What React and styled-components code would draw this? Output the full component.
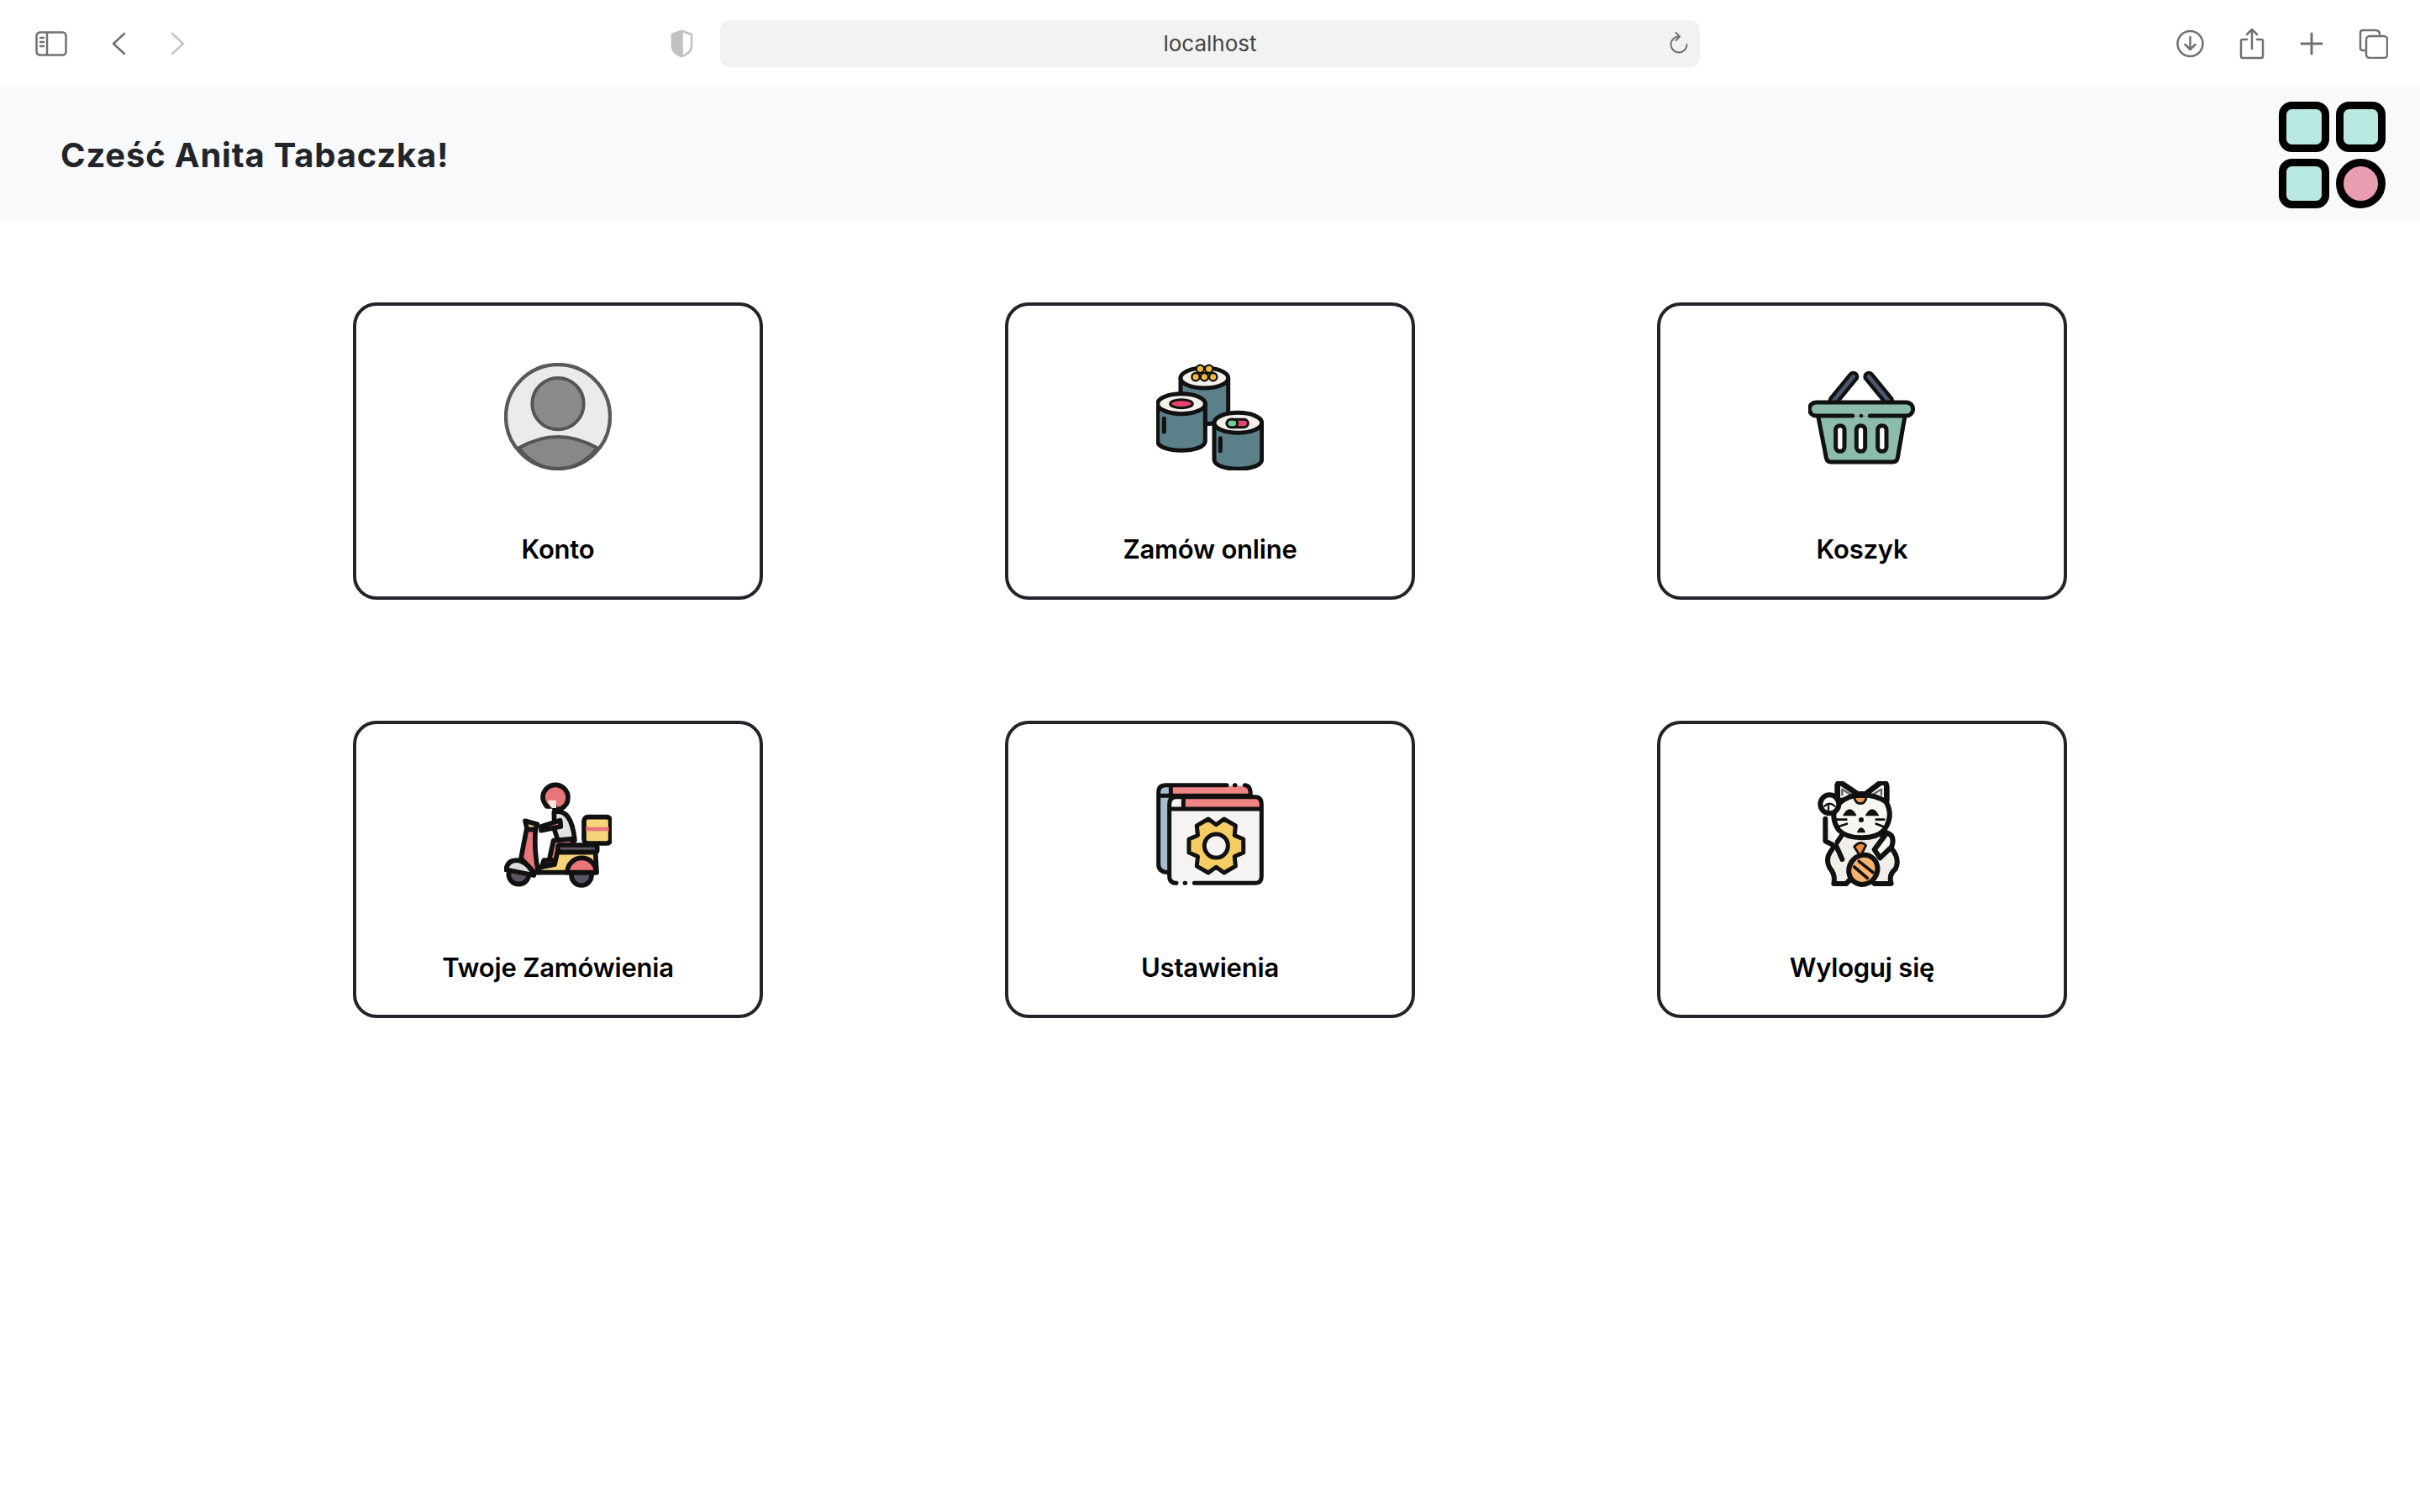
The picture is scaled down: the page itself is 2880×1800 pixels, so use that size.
import React from 'react';
import styled, { createGlobalStyle } from 'styled-components';

const GlobalStyle = createGlobalStyle`
  html, body {
    margin: 0;
    padding: 0;
    background: #fff;
    font-family: Inter, "Liberation Sans", sans-serif;
  }
`;

const Toolbar = styled.div`
  height: 104px;
  display: flex;
  align-items: center;
  padding: 0 38px 0 42px;
  background: #fff;
`;

const NavGroup = styled.div`
  flex: 0 0 756px;
  display: flex;
  align-items: center;
  gap: 53px;
`;

const ActionGroup = styled.div`
  margin-left: auto;
  display: flex;
  align-items: center;
  gap: 42px;
`;

const AddressBar = styled.div`
  width: 1166px;
  height: 56px;
  margin-left: 32px;
  padding: 0 14px 2px;
  box-sizing: border-box;
  display: grid;
  grid-template-columns: 1fr auto 1fr;
  align-items: center;
  background: #f2f2f2;
  border-radius: 12px;
  color: #444;
  font-size: 26px;
`;

const Reload = styled.span`
  grid-column: 3;
  justify-self: end;
  display: flex;
`;

const Header = styled.header`
  height: 160px;
  display: flex;
  align-items: center;
  justify-content: space-between;
  padding: 0 41px 0 72px;
  background: #f8f9fa;
`;

const Title = styled.h1`
  margin: 0;
  font-size: 40px;
  font-weight: 700;
  letter-spacing: 0.8px;
  color: #212529;
`;

const Menu = styled.main`
  display: grid;
  grid-template-columns: repeat(3, 488px);
  justify-content: center;
  column-gap: 288px;
  row-gap: 144px;
  padding-top: 96px;
`;

const Card = styled.a`
  box-sizing: border-box;
  height: 354px;
  padding-top: 68px;
  display: flex;
  flex-direction: column;
  align-items: center;
  border: 4px solid #212529;
  border-radius: 28px;
  color: #000;
  cursor: pointer;
`;

const Label = styled.span`
  margin-top: 74px;
  font-size: 31px;
  line-height: 40px;
  font-weight: 600;
  letter-spacing: -0.2px;
`;

const IconSvg = styled.svg`
  filter: blur(0.6px);
`;

const Icon = ({ x, y, sw = 15, children }) => (
    <IconSvg width="128" height="128" viewBox={`${x} ${y} 384 384`} fill="none" stroke="#111" strokeWidth={sw}
             strokeLinecap="round" strokeLinejoin="round">
        {children}
    </IconSvg>
);

const Glyph = ({ w, h, sw = 2.5, color = '#707070', children }) => (
    <svg width={w} height={h} viewBox={`0 0 ${w} ${h}`} fill="none" stroke={color} strokeWidth={sw}
         strokeLinecap="round" strokeLinejoin="round">
        {children}
    </svg>
);

const UserIcon = () => (
    <Icon x={120} y={66}>
        <circle cx="312" cy="258" r="186" fill="#ebebeb" stroke="#5a5a5a" strokeWidth="13"/>
        <circle cx="312" cy="212" r="92" fill="#8b8b8b" stroke="#555" strokeWidth="12"/>
        <path d="M172 370Q312 290 452 370Q395 444 312 444Q229 444 172 370Z" fill="#888" stroke="#555" strokeWidth="12"/>
    </Icon>
);

const Roll = ({ cx, cy, bottom, children }) => (
    <g>
        <path d={`M${cx - 85} ${cy}V${bottom - 35}C${cx - 85} ${bottom + 10} ${cx + 85} ${bottom + 10} ${cx + 85} ${bottom - 35}V${cy}Z`}
              fill="#5c8089"/>
        <ellipse cx={cx} cy={cy} rx="85" ry="36" fill="#f4f0ec"/>
        {children}
    </g>
);

const SushiIcon = () => (
    <Icon x={108} y={66}>
        <Roll cx={280} cy={120} bottom={285}>
            <g fill="#f2bd36" strokeWidth="7">
                <circle cx="265" cy="88" r="14"/>
                <circle cx="296" cy="88" r="14"/>
                <circle cx="249" cy="116" r="14"/>
                <circle cx="280" cy="116" r="14"/>
                <circle cx="311" cy="116" r="14"/>
            </g>
        </Roll>
        <Roll cx={198} cy={212} bottom={380}>
            <ellipse cx="198" cy="212" rx="40" ry="15" fill="#e8446f" strokeWidth="9"/>
            <path d="M136 265V312"/>
        </Roll>
        <Roll cx={400} cy={280} bottom={446}>
            <rect x="360" y="268" width="76" height="28" rx="14" fill="#e8446f" strokeWidth="9"/>
            <rect x="360" y="268" width="38" height="28" rx="14" fill="#6fd08c" strokeWidth="9"/>
            <path d="M337 335V380"/>
        </Roll>
    </Icon>
);

const BasketIcon = () => (
    <Icon x={114} y={66}>
        <path d="M205 200L275 115M400 200L330 115" strokeWidth="40"/>
        <path d="M205 200L275 115M400 200L330 115" stroke="#4b5671" strokeWidth="14"/>
        <path d="M148 250L178 405Q181 420 196 420H415Q430 420 433 405L460 250Z" fill="#8cbdab"/>
        <rect x="118" y="207" width="370" height="50" rx="25" fill="#8cbdab" stroke="none"/>
        <path d="M272 255H142A24 24 0 0 1 142 207H464A24 24 0 0 1 464 255H334"/>
        <circle cx="303" cy="255" r="7" fill="#111" stroke="none"/>
        <g fill="#fff">
            <rect x="212" y="290" width="31" height="92" rx="15"/>
            <rect x="286" y="290" width="31" height="92" rx="15"/>
            <rect x="362" y="290" width="31" height="92" rx="15"/>
        </g>
    </Icon>
);

const ScooterIcon = () => (
    <Icon x={120} y={60} sw={17}>
        <circle cx="172" cy="392" r="36" fill="#5b5462"/>
        <circle cx="396" cy="396" r="36" fill="#5b5462"/>
        <rect x="405" y="188" width="95" height="94" rx="14" fill="#f6d57a"/>
        <rect x="412" y="224" width="82" height="14" fill="#e8757a" stroke="none"/>
        <path d="M298 170Q360 155 372 270L312 272L300 235Z" fill="#e2e2e2"/>
        <path d="M320 200L252 222V236L322 222Z" fill="#e8757a"/>
        <path d="M366 266L296 272L280 345H306L314 298L366 288Z" fill="#e8757a"/>
        <path d="M262 342H304V360H256Z" fill="#4d4650"/>
        <rect x="312" y="288" width="140" height="26" rx="6" fill="#5f5a66"/>
        <path d="M310 314H446L450 386H245V368L300 358Z" fill="#f6d57a"/>
        <path d="M345 386A52 52 0 0 1 449 386Z" fill="#e8757a"/>
        <path d="M200 232H232Q226 310 242 386H228L180 335Z" fill="#e8757a"/>
        <path d="M195 202L238 214L232 232H202Z" fill="#f6d57a"/>
        <path d="M126 376Q134 336 176 344Q212 358 226 396Z" fill="#dcdcdc"/>
        <path d="M272 150Q258 132 258 118A45 45 0 0 1 348 118Q348 148 320 160H300V150Z" fill="#e8757a"/>
        <path d="M276 128H306V156H292Q278 148 276 128Z" fill="#fbe6dc" stroke="none"/>
    </Icon>
);

// six flat teeth, outline computed once
const gearPoints = Array.from({ length: 6 }).flatMap((_, i) => {
    const a = (i * Math.PI) / 3;
    const pt = (r, d) => `${322 + r * Math.cos(a + d)},${297 + r * Math.sin(a + d)}`;
    return [pt(76, -0.52), pt(100, -0.24), pt(100, 0.24), pt(76, 0.52)];
}).join(' ');

const SettingsIcon = () => (
    <Icon x={108} y={66}>
        <path d="M116 110Q116 82 142 82H440V125H160V392Q116 392 116 360Z" fill="#a6bccf" stroke="none"/>
        <rect x="160" y="84" width="282" height="32" fill="#f08585" stroke="none"/>
        <path d="M360 80H142Q116 80 116 106V362Q116 390 150 392M388 80H390M424 80Q445 80 445 115M116 118H445M160 84V122"/>
        <path d="M155 430V150Q155 122 178 122H462Q484 122 484 150V405Q484 430 462 430Z" fill="#f6f4f2" stroke="none"/>
        <rect x="208" y="128" width="272" height="32" fill="#f08585" stroke="none"/>
        <path d="M180 430Q155 430 155 405V150Q155 122 178 122H462Q484 122 484 150V405Q484 430 462 430H244M210 430H212M155 165H484M205 124V165"/>
        <polygon points={gearPoints} fill="#f6cd63"/>
        <circle cx="322" cy="297" r="42" fill="#f6f4f2"/>
    </Icon>
);

const CatIcon = () => (
    <Icon x={114} y={66} sw={18}>
        <path d="M205 432Q212 400 190 375Q175 345 192 320L240 250H370L420 318Q440 350 425 380Q400 400 410 432H350L335 420H260L250 432Z"
              fill="#efeee8"/>
        <path d="M175 200V280L215 300L235 345" fill="#f5f3ee"/>
        <path d="M218 135V80Q222 66 240 78L290 112H318L368 74Q392 64 394 84V135Z" fill="#f4f2ec" strokeWidth="20"/>
        <path d="M235 115V95L268 115M375 115V95L342 115" strokeWidth="7" stroke="#666"/>
        <path d="M218 150Q190 190 222 240Q250 268 305 268Q360 268 385 240Q420 190 392 140Q355 115 305 115Q255 115 218 150Z"
              fill="#f8f6f0"/>
        <path d="M278 122H322Q318 145 300 146Q282 145 278 122Z" fill="#f09a54" strokeWidth="8"/>
        <circle cx="190" cy="148" r="33" fill="#fff"/>
        <path d="M186 148V170M172 155Q190 138 208 155" strokeWidth="7"/>
        <path d="M240 188Q262 148 284 188ZM320 188Q342 148 364 188Z" fill="#111" strokeWidth="4"/>
        <circle cx="303" cy="204" r="9" fill="#111" stroke="none"/>
        <path d="M290 248Q303 220 316 248Z" fill="#111" strokeWidth="4"/>
        <path d="M205 203H250M222 228L252 218M356 203H385M356 218L382 228" strokeWidth="8"/>
        <path d="M350 310L395 250Q425 260 412 300L370 340Z" fill="#f8f6f0"/>
        <path d="M278 300Q300 275 320 295L300 335Z" fill="#f08a3e" strokeWidth="8"/>
        <ellipse cx="310" cy="382" rx="50" ry="54" transform="rotate(35 310 382)" fill="#f6b36c"/>
        <path d="M278 372L325 412M295 352L345 392" strokeWidth="11"/>
    </Icon>
);

const Logo = () => (
    <svg width="127" height="127" viewBox="0 0 127 127" stroke="#000" strokeWidth="9">
        <rect x="4.5" y="4.5" width="51" height="51" rx="11" fill="#b8e8e0"/>
        <rect x="72.5" y="4.5" width="50" height="51" rx="11" fill="#b8e8e0"/>
        <rect x="4.5" y="72.5" width="51" height="50" rx="11" fill="#b8e8e0"/>
        <circle cx="97.5" cy="97.5" r="25" fill="#e89db0"/>
    </svg>
);

const menuItems = [
    { label: 'Konto', icon: <UserIcon/> },
    { label: 'Zamów online', icon: <SushiIcon/> },
    { label: 'Koszyk', icon: <BasketIcon/> },
    { label: 'Twoje Zamówienia', icon: <ScooterIcon/> },
    { label: 'Ustawienia', icon: <SettingsIcon/> },
    { label: 'Wyloguj się', icon: <CatIcon/> },
];

const App = () => {
    return (
        <>
            <GlobalStyle/>
            <Toolbar>
                <NavGroup>
                    <Glyph w={38} h={30}>
                        <rect x="1.5" y="1.5" width="35" height="27" rx="4"/>
                        <path d="M14 2V28M6 8H10M6 13H10M6 18H10"/>
                    </Glyph>
                    <Glyph w={17} h={28}>
                        <path d="M15 2L2 14L15 26"/>
                    </Glyph>
                    <Glyph w={17} h={28} color="#c4c4c4">
                        <path d="M2 2L15 14L2 26"/>
                    </Glyph>
                </NavGroup>
                <Glyph w={27} h={34} color="#c2c2c2">
                    <path d="M13.5 2L25 6V20Q25 28 13.5 32Q2 28 2 20V6Z"/>
                    <path d="M13.5 2L2 6V20Q2 28 13.5 32Z" fill="#c2c2c2"/>
                </Glyph>
                <AddressBar>
                    <span/>
                    localhost
                    <Reload>
                        <Glyph w={22} h={26} sw={2}>
                            <path d="M11 5.5A9.5 9.5 0 1 0 20.5 15M7.5 1L12 5.5L7.5 10"/>
                        </Glyph>
                    </Reload>
                </AddressBar>
                <ActionGroup>
                    <Glyph w={33} h={34}>
                        <circle cx="16.5" cy="17" r="15"/>
                        <path d="M16.5 9V24M10.5 18L16.5 24L22.5 18"/>
                    </Glyph>
                    <Glyph w={30} h={38}>
                        <path d="M9 14H4Q2 14 2 16V34Q2 36 4 36H26Q28 36 28 34V16Q28 14 26 14H21M15 25V2M9 8L15 2L21 8"/>
                    </Glyph>
                    <Glyph w={28} h={28} sw={3}>
                        <path d="M14 2V26M2 14H26"/>
                    </Glyph>
                    <Glyph w={35} h={36}>
                        <path d="M8 26H5Q2 26 2 23V5Q2 2 5 2H20Q25 2 25 7"/>
                        <rect x="9" y="9" width="25" height="26" rx="4" fill="#fff"/>
                    </Glyph>
                </ActionGroup>
            </Toolbar>
            <Header>
                <Title>Cześć Anita Tabaczka!</Title>
                <Logo/>
            </Header>
            <Menu>
                {menuItems.map(item => (
                    <Card key={item.label}>
                        {item.icon}
                        <Label>{item.label}</Label>
                    </Card>
                ))}
            </Menu>
        </>
    );
};

export default App;
